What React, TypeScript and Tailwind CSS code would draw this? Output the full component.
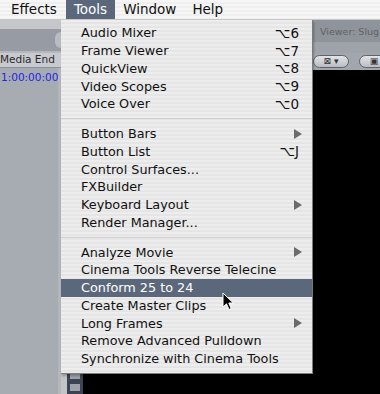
import type { ReactNode } from "react"

type Item =
  | { kind: "item"; label: string; shortcut?: string; submenu?: boolean; active?: boolean }
  | { kind: "sep" }

const ITEMS: Item[] = [
  { kind: "item", label: "Audio Mixer", shortcut: "⌥6" },
  { kind: "item", label: "Frame Viewer", shortcut: "⌥7" },
  { kind: "item", label: "QuickView", shortcut: "⌥8" },
  { kind: "item", label: "Video Scopes", shortcut: "⌥9" },
  { kind: "item", label: "Voice Over", shortcut: "⌥0" },
  { kind: "sep" },
  { kind: "item", label: "Button Bars", submenu: true },
  { kind: "item", label: "Button List", shortcut: "⌥J" },
  { kind: "item", label: "Control Surfaces..." },
  { kind: "item", label: "FXBuilder" },
  { kind: "item", label: "Keyboard Layout", submenu: true },
  { kind: "item", label: "Render Manager..." },
  { kind: "sep" },
  { kind: "item", label: "Analyze Movie", submenu: true },
  { kind: "item", label: "Cinema Tools Reverse Telecine" },
  { kind: "item", label: "Conform 25 to 24", active: true },
  { kind: "item", label: "Create Master Clips" },
  { kind: "item", label: "Long Frames", submenu: true },
  { kind: "item", label: "Remove Advanced Pulldown" },
  { kind: "item", label: "Synchronize with Cinema Tools" },
]

const MENUS = ["Effects", "Tools", "Window", "Help"]

function SubmenuArrow({ light }: { light?: boolean }) {
  return (
    <svg width="8" height="10" viewBox="0 0 8 10" className="mr-[-3px]">
      <polygon points="0,0 8,5 0,10" fill={light ? "#ffffff" : "#6b6b6b"} />
    </svg>
  )
}

function Cursor() {
  return (
    <svg width="14" height="20" viewBox="0 0 14 20" className="absolute left-[222px] top-[292px]">
      <path
        d="M1 1 L1 15 L4.5 11.8 L7 17.5 L9.2 16.5 L6.8 11 L11.3 11 Z"
        fill="#000"
        stroke="#fff"
        strokeWidth="1"
        strokeLinejoin="round"
      />
    </svg>
  )
}

function Row({ item }: { item: Extract<Item, { kind: "item" }> }) {
  return (
    <div
      className={`flex h-[17.75px] items-center justify-between pl-[20px] pr-[13px] ${
        item.active ? "bg-[#5b687c] text-white" : "text-[#111]"
      }`}
    >
      <span>{item.label}</span>
      {item.shortcut ? <span className="text-[13.5px]">{item.shortcut}</span> : null}
      {item.submenu ? <SubmenuArrow light={item.active} /> : null}
    </div>
  )
}

function Pill({ children, className }: { children: ReactNode; className?: string }) {
  return (
    <div
      className={`flex h-[13px] shrink-0 items-center justify-center rounded-full border border-[#5f636b] bg-[linear-gradient(#e2e4e7,#b9bcc2)] text-[9px] leading-none text-[#333] ${className ?? ""}`}
    >
      {children}
    </div>
  )
}

export default function App() {
  return (
    <div className="relative h-[394px] w-[380px] overflow-hidden bg-black font-['DejaVu_Sans',sans-serif] text-[12.8px]">
      {/* menu bar */}
      <div className="flex h-[20px] items-stretch border-b border-[#c8c8c8] bg-[repeating-linear-gradient(180deg,#f6f6f6_0px,#f6f6f6_2px,#efefef_2px,#efefef_4px)] pl-[3px] text-[13.5px] text-[#111]">
        {MENUS.map((m) => (
          <div
            key={m}
            className={`flex items-center px-[8px] ${m === "Tools" ? "ml-[1px] bg-[#5b687c] text-white" : ""}`}
          >
            {m}
          </div>
        ))}
      </div>

      {/* app behind the menu */}
      <div className="flex h-[374px]">
        <div className="flex w-[61px] shrink-0 flex-col bg-[#a7abb2]">
          <div className="h-[9px] bg-[#c4c6ca]" />
          <div className="flex h-[22px] justify-end bg-[#979ba3]">
            <div className="mt-[3px] h-[16px] w-[6px] rounded-l-full bg-[#b9bcc1]" />
          </div>
          <div className="h-[2px] bg-[#b4b7bc]" />
          <div className="flex h-[15px] items-center overflow-hidden whitespace-nowrap border-b border-[#8e9299] bg-[#c8cacf] text-[10.5px] text-[#2a2a2a]">
            Media End
          </div>
          <div className="flex flex-1">
            <div className="flex-1 pl-[1px] pt-[2px] text-[10.5px] text-[#2424e6]">1:00:00:00</div>
            <div className="w-[6px] bg-[#b3b6bb]" />
          </div>
        </div>
        <div className="flex w-[251px] shrink-0 flex-col">
          <div className="flex-1 bg-[#a7abb2]" />
          <div className="flex h-[22px]">
            <div className="w-[6px] bg-[#c2c4c8]" />
            <div className="flex w-[16px] flex-col items-center gap-[5px] bg-[#3c4352] pt-[2px]">
              <div className="h-[5px] w-[10px] bg-[#9ca1aa]" />
              <div className="h-[7px] w-[10px] bg-[#9ca1aa]" />
            </div>
            <div className="flex-1 bg-black" />
          </div>
        </div>
        <div className="flex min-w-0 flex-1 flex-col overflow-hidden">
          <div className="flex h-[22px] items-end whitespace-nowrap bg-[#8f939a] pb-[3px] pl-[8px] text-[9.5px] text-[#5e6269]">
            Viewer: Slug
          </div>
          <div className="h-[11px] bg-[#9ea2a9]" />
          <div className="flex h-[17px] items-start gap-[10px] bg-[#a2a6ad] pl-[1px] pt-[2px]">
            <Pill className="w-[36px]">⊠ ▾</Pill>
            <Pill className="w-[30px]">▣</Pill>
          </div>
          <div className="flex-1 bg-black" />
        </div>
      </div>

      {/* Tools dropdown */}
      <div className="absolute left-[61px] top-[20px] w-[252px] border-r border-b border-[#7b7b7b] bg-[repeating-linear-gradient(180deg,#ededed_0px,#ededed_2px,#e5e5e5_2px,#e5e5e5_4px)] pb-[5px] pt-[4px] shadow-[1px_2px_2px_rgba(0,0,0,0.25)]">
        {ITEMS.map((item, i) =>
          item.kind === "sep" ? (
            <div key={i} className="flex h-[12px] items-center">
              <div className="h-[1px] w-full bg-[#cfcfcf]" />
            </div>
          ) : (
            <Row key={i} item={item} />
          ),
        )}
      </div>

      <Cursor />
    </div>
  )
}
